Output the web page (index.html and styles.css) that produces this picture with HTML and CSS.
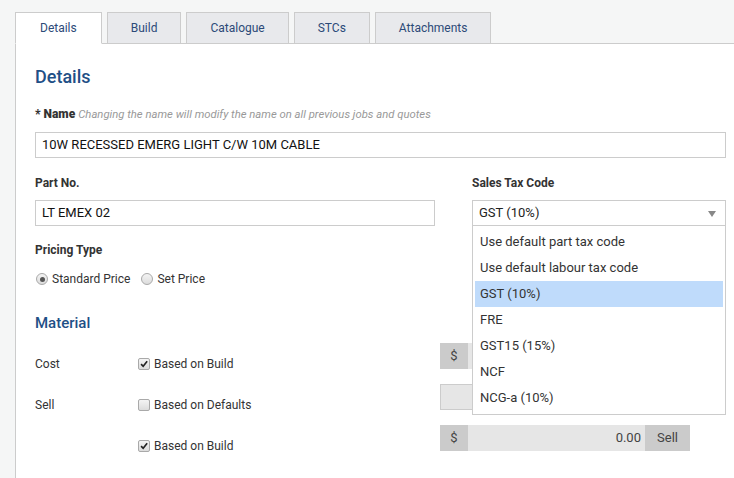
FILE: index.html
```html
<!DOCTYPE html>
<html>
<head>
<meta charset="utf-8">
<link rel="stylesheet" href="styles.css">
</head>
<body>
<div class="tabs">
  <div class="tab active">Details</div>
  <div class="tab">Build</div>
  <div class="tab">Catalogue</div>
  <div class="tab">STCs</div>
  <div class="tab">Attachments</div>
</div>
<div class="panel">
  <h2 class="title">Details</h2>
  <div class="label name-label"><b>* Name</b> <i class="hint">Changing the name will modify the name on all previous jobs and quotes</i></div>
  <div class="input">10W RECESSED EMERG LIGHT C/W 10M CABLE</div>

  <div class="split">
    <div class="col-left">
      <div class="label">Part No.</div>
      <div class="input">LT EMEX 02</div>
      <div class="label pricing-label">Pricing Type</div>
      <div class="radios">
        <span class="radio on"></span><span class="opt">Standard Price</span>
        <span class="radio"></span><span class="opt">Set Price</span>
      </div>
    </div>
    <div class="col-right">
      <div class="label">Sales Tax Code</div>
      <div class="select">
        <span>GST (10%)</span>
        <span class="arrow"></span>
        <ul class="dropdown">
          <li>Use default part tax code</li>
          <li>Use default labour tax code</li>
          <li class="sel">GST (10%)</li>
          <li>FRE</li>
          <li>GST15 (15%)</li>
          <li>NCF</li>
          <li>NCG-a (10%)</li>
        </ul>
      </div>
    </div>
  </div>

  <h3 class="subtitle">Material</h3>
  <div class="mat">
    <div class="row">
      <span class="rlabel">Cost</span>
      <span class="check"><span class="box on"><svg viewBox="0 0 12 12"><path d="M2.5 6.2 L5 8.8 L9.8 2.8" fill="none" stroke="#222" stroke-width="2"/></svg></span>Based on Build</span>
      <span class="group"><span class="addon">$</span><span class="field"></span></span>
    </div>
    <div class="row">
      <span class="rlabel">Sell</span>
      <span class="check"><span class="box"></span>Based on Defaults</span>
      <span class="group"><span class="field bordered"></span></span>
    </div>
    <div class="row">
      <span class="rlabel"></span>
      <span class="check"><span class="box on"><svg viewBox="0 0 12 12"><path d="M2.5 6.2 L5 8.8 L9.8 2.8" fill="none" stroke="#222" stroke-width="2"/></svg></span>Based on Build</span>
      <span class="group"><span class="addon">$</span><span class="field val">0.00</span><span class="addon sell">Sell</span></span>
    </div>
  </div>
</div>
</body>
</html>
```
FILE: styles.css
```css
* { box-sizing: border-box; }
html, body { margin: 0; padding: 0; }
body {
  background: #f5f6f6;
  font-family: Roboto, "Liberation Sans", Arial, sans-serif;
  color: #333;
  width: 734px;
  height: 478px;
  overflow: hidden;
}
.tabs {
  display: flex;
  gap: 5px;
  padding: 12px 0 0 15px;
  position: relative;
  z-index: 1;
}
.tab {
  height: 32px;
  line-height: 30px;
  padding: 0 23px;
  font-size: 12px;
  color: #2c4a78;
  background: #e8e9ec;
  border: 1px solid #ccc;
  margin-bottom: -1px;
}
.tab.active {
  background: #fff;
  border-bottom-color: #fff;
  padding: 0 24px;
}
.panel {
  margin-left: 15px;
  background: #fff;
  border-left: 1px solid #ccc;
  border-top: 1px solid #ccc;
  padding: 22px 8px 40px 19px;
  height: 440px;
}
.title {
  margin: 0;
  font-size: 18px;
  font-weight: 500;
  color: #1f4f86;
  line-height: 22px;
}
.label {
  font-size: 12px;
  font-weight: bold;
  color: #333;
  line-height: 14px;
}
.name-label { margin-top: 19px; margin-bottom: 10px; }
.hint {
  font-weight: normal;
  color: #999;
  font-size: 11.3px;
}
.input {
  height: 26px;
  border: 1px solid #ccc;
  font-size: 13px;
  color: #111;
  line-height: 24px;
  padding-left: 6px;
  background: #fff;
}
.split {
  display: grid;
  grid-template-columns: 400px 1fr;
  column-gap: 37px;
  margin-top: 18px;
}
.col-left .label, .col-right .label { margin-bottom: 10px; }
.pricing-label { margin-top: 17px; }
.radios {
  display: flex;
  align-items: center;
  margin-top: 15px;
  font-size: 12px;
  color: #333;
}
.radio {
  width: 12px; height: 12px;
  border-radius: 50%;
  border: 1px solid #a9a9a9;
  background: linear-gradient(#f4f4f4, #dcdcdc);
  margin: 0 4px 0 1px;
  position: relative;
}
.radio.on::after {
  content: "";
  position: absolute;
  left: 2.5px; top: 2.5px;
  width: 5px; height: 5px;
  border-radius: 50%;
  background: #555;
}
.opt { margin-right: 10px; }
.select {
  position: relative;
  height: 26px;
  border: 1px solid #ccc;
  font-size: 13px;
  color: #222;
  line-height: 24px;
  padding-left: 6px;
}
.arrow {
  position: absolute;
  right: 9px; top: 10px;
  width: 0; height: 0;
  border-left: 4px solid transparent;
  border-right: 4px solid transparent;
  border-top: 6px solid #888;
}
.dropdown {
  position: absolute;
  left: -1px; right: -1px;
  top: 24px;
  margin: 0;
  padding: 3px 2px 3px;
  list-style: none;
  background: #fff;
  border: 1px solid #ccc;
  z-index: 5;
}
.dropdown li {
  height: 26px;
  line-height: 26px;
  padding-left: 5px;
  font-size: 13px;
  color: #333;
}
.dropdown li.sel { background: #bfdbfb; }
.subtitle {
  margin: 28px 0 0;
  font-size: 15px;
  font-weight: 500;
  color: #1f4f86;
  line-height: 18px;
}
.mat { margin-top: 11px; }
.row {
  display: grid;
  grid-template-columns: 103px 302px 250px;
  align-items: center;
  height: 26px;
  margin-bottom: 15px;
  font-size: 12px;
  color: #333;
}
.row .check, .row .rlabel { position: relative; top: 8px; }
.check { display: flex; align-items: center; }
.box {
  width: 12px; height: 12px;
  border: 1px solid #a9a9a9;
  border-radius: 2px;
  background: linear-gradient(#f4f4f4, #dcdcdc);
  margin-right: 4px;
  display: inline-block;
}
.box svg { width: 10px; height: 10px; display: block; }
.group {
  display: flex;
  height: 26px;
}
.addon {
  width: 28px;
  background: #cbcbcb;
  text-align: center;
  line-height: 26px;
  font-size: 13px;
  color: #444;
}
.field {
  flex: 1;
  background: #e6e6e6;
  font-size: 13px;
  color: #444;
  text-align: right;
  line-height: 26px;
  padding-right: 4px;
}
.field.bordered { border: 1px solid #ccc; }
.addon.sell { width: 45px; }
```
